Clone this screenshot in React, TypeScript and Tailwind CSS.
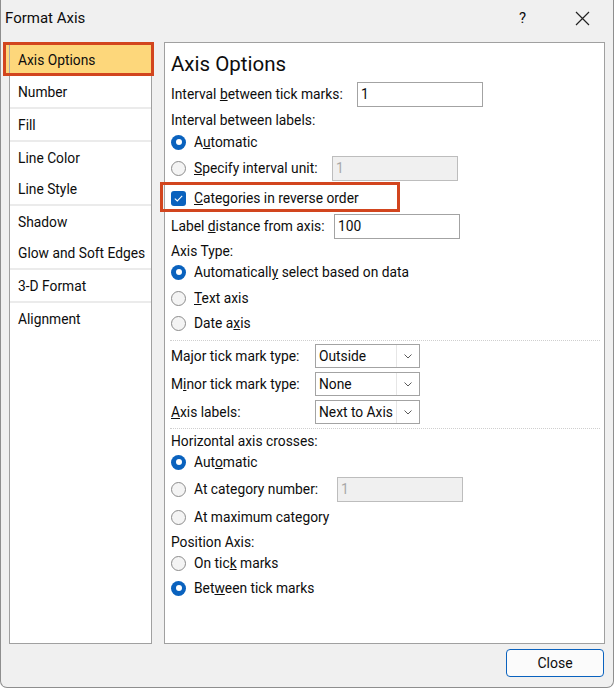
import React from "react";

function Radio({ checked }: { checked?: boolean }) {
    if (checked) {
        return (
            <span className="flex h-[15px] w-[15px] shrink-0 items-center justify-center rounded-full bg-[#0a62be]">
                <span className="h-[6px] w-[6px] rounded-full bg-white" />
            </span>
        );
    }
    return <span className="h-[15px] w-[15px] shrink-0 rounded-full border border-[#8c8c8c] bg-[#f4f4f4]" />;
}

function TextBox({ value, disabled }: { value: string; disabled?: boolean }) {
    return (
        <div
            className={
                disabled
                    ? "flex h-[25px] w-[126px] items-center border border-[#bdbdbd] bg-[#f0f0f0] pl-[3px] pt-px text-[#a8a8a8]"
                    : "flex h-[25px] w-[126px] items-center border border-[#a3a3a3] bg-white pl-[3px] pt-px"
            }
        >
            {value}
        </div>
    );
}

function Select({ value }: { value: string }) {
    return (
        <div className="flex h-[24px] w-[105px] items-center border border-[#a3a3a3] bg-white">
            <span className="flex-1 overflow-hidden whitespace-nowrap pl-[3px] pt-px">{value}</span>
            <span className="flex h-full w-[23px] items-center justify-center border-l border-[#e6e6e6]">
                <svg width="8" height="5" viewBox="0 0 8 5" fill="none">
                    <path d="M0.5 0.5 L4 4 L7.5 0.5" stroke="#5a5a5a" strokeWidth="1" />
                </svg>
            </span>
        </div>
    );
}

function Option({ checked, h, extra, children }: { checked?: boolean; h: string; extra?: string; children: React.ReactNode }) {
    return (
        <div className={`flex items-center gap-[8px] ${h} ${extra ?? ""}`}>
            <Radio checked={checked} />
            <span className="pt-px">{children}</span>
        </div>
    );
}

const sections = [
    ["Axis Options", "Number"],
    ["Fill"],
    ["Line Color", "Line Style"],
    ["Shadow", "Glow and Soft Edges"],
    ["3-D Format"],
    ["Alignment"],
];

export default function App() {
    return (
        <div className="flex h-[688px] w-[614px] flex-col rounded-b-[7px] border-x border-b border-[#8e8e8e] bg-[#f0f0f0] font-['Roboto',sans-serif] text-[13.8px] text-[#0d0d0d]">
            {/* title bar */}
            <div className="flex h-[36px] items-center pl-[4px]">
                <span className="text-[15px]">Format Axis</span>
                <span className="ml-auto mr-[49px] text-[15px]">?</span>
                <svg className="mr-[23px]" width="15" height="15" viewBox="0 0 15 15">
                    <path d="M1 1 L14 14 M14 1 L1 14" stroke="#222" strokeWidth="1.2" />
                </svg>
            </div>
            <div className="h-[6px]" />

            <div className="flex h-[602px] gap-[12px] pl-[8px] pr-[8px]">
                {/* category list */}
                <div className="flex w-[143px] flex-col border border-[#a0a0a0] bg-white">
                    {sections.map((group, gi) => (
                        <React.Fragment key={gi}>
                            {gi > 0 && <div className="h-[2px] bg-[#ebebeb]" />}
                            {group.map((item) =>
                                item === "Axis Options" ? (
                                    <div
                                        key={item}
                                        className="-ml-[7px] -mr-[3px] -mt-px h-[34px] shrink-0 border-[3px] border-[#d2451e] bg-[#fdd77b]"
                                    >
                                        <div className="ml-[3px] flex h-full items-center border-l border-[#a8a8a8] pl-[8px] pt-[2px]">
                                            {item}
                                        </div>
                                    </div>
                                ) : (
                                    <div key={item} className="flex h-[31px] items-center pl-[8px] pt-px">
                                        {item}
                                    </div>
                                )
                            )}
                        </React.Fragment>
                    ))}
                </div>

                {/* options panel */}
                <div className="flex w-[441px] flex-col border border-[#a0a0a0] bg-white pl-[6px] pt-[7px]">
                    <div className="flex h-[28px] items-center text-[20.5px]">Axis Options</div>

                    <div className="mt-[3px] flex h-[26px] items-center">
                        <span className="w-[186px] pt-px">
                            Interval <u>b</u>etween tick marks:
                        </span>
                        <TextBox value="1" />
                    </div>
                    <div className="flex h-[26px] items-center pt-px">Interval between labels:</div>
                    <Option checked h="h-[18px]">
                        A<u>u</u>tomatic
                    </Option>
                    <div className="flex h-[34px] items-center">
                        <div className="flex w-[161px] items-center gap-[8px]">
                            <Radio />
                            <span className="pt-px">
                                <u>S</u>pecify interval unit:
                            </span>
                        </div>
                        <TextBox value="1" disabled />
                    </div>

                    <div className="relative flex h-[26px] items-center gap-[8px]">
                        <div className="absolute -left-[11px] -top-[3px] h-[30px] w-[240px] border-[3px] border-[#d2451e]" />
                        <span className="flex h-[15px] w-[15px] shrink-0 items-center justify-center rounded-[3px] bg-[#0a62be]">
                            <svg width="9" height="7" viewBox="0 0 9 7" fill="none">
                                <path d="M0.8 3.6 L3.3 6 L8.2 0.9" stroke="white" strokeWidth="1.1" />
                            </svg>
                        </span>
                        <span className="pt-px">
                            <u>C</u>ategories in reverse order
                        </span>
                    </div>

                    <div className="flex h-[30px] items-center">
                        <span className="w-[163px] pt-px">
                            Label <u>d</u>istance from axis:
                        </span>
                        <TextBox value="100" />
                    </div>
                    <div className="flex h-[20px] items-center pt-px">Axis Type:</div>
                    <Option checked h="h-[22px]">
                        Automaticall<u>y</u> select based on data
                    </Option>
                    <Option h="h-[24px]" extra="mt-[3px]">
                        <u>T</u>ext axis
                    </Option>
                    <Option h="h-[26px]">
                        Date a<u>x</u>is
                    </Option>

                    <div className="-ml-px mr-[4px] mt-[4px] border-t border-dotted border-[#cfcfcf]" />

                    <div className="mt-[3px] flex h-[24px] items-center">
                        <span className="w-[144px] pt-px">Major tick mark type:</span>
                        <Select value="Outside" />
                    </div>
                    <div className="mt-[4px] flex h-[24px] items-center">
                        <span className="w-[144px] pt-px">
                            M<u>i</u>nor tick mark type:
                        </span>
                        <Select value="None" />
                    </div>
                    <div className="mt-[4px] flex h-[24px] items-center">
                        <span className="w-[144px] pt-px">
                            <u>A</u>xis labels:
                        </span>
                        <Select value="Next to Axis" />
                    </div>

                    <div className="-ml-px mr-[4px] mt-[4px] border-t border-dotted border-[#cfcfcf]" />

                    <div className="flex h-[24px] items-center pt-px">Horizontal axis crosses:</div>
                    <Option checked h="h-[18px]">
                        Aut<u>o</u>matic
                    </Option>
                    <div className="flex h-[36px] items-center">
                        <div className="flex w-[166px] items-center gap-[8px]">
                            <Radio />
                            <span className="pt-px">
                                At cate<u>g</u>ory number:
                            </span>
                        </div>
                        <TextBox value="1" disabled />
                    </div>
                    <Option h="h-[20px]">At maximum category</Option>
                    <div className="mt-[3px] flex h-[24px] items-center pt-px">Position Axis:</div>
                    <Option h="h-[18px]">
                        On tic<u>k</u> marks
                    </Option>
                    <Option checked h="h-[24px]" extra="mt-[4px]">
                        Bet<u>w</u>een tick marks
                    </Option>
                </div>
            </div>

            <div className="mt-[5px] flex justify-end pr-[9px]">
                <button className="flex h-[28px] w-[98px] items-center justify-center rounded-[4px] border border-[#0a62be] bg-[#fbfbfb] pt-px text-[14px]">
                    Close
                </button>
            </div>
        </div>
    );
}
